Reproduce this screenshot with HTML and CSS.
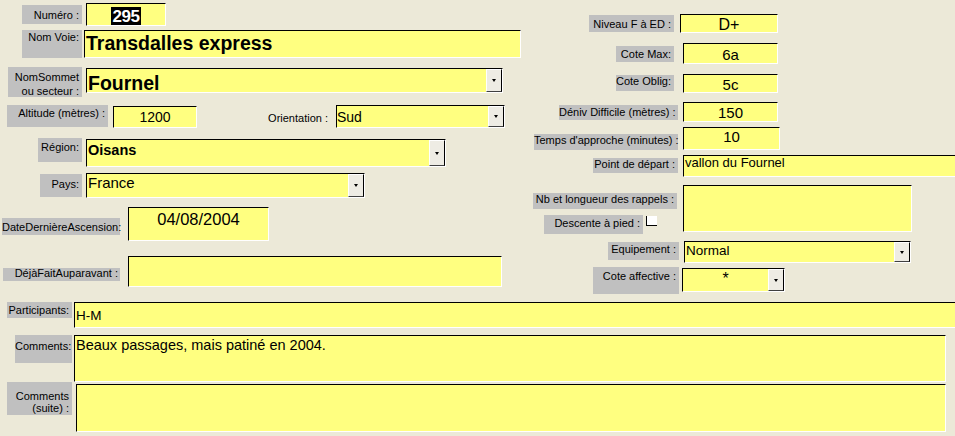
FILE: index.html
```html
<!DOCTYPE html>
<html lang="fr">
<head>
  <meta charset="UTF-8">
  <title>Voies - Fiche</title>
  <link rel="stylesheet" href="styles.css">
</head>
<body>
  <div class="form">
    <div class="top">
      <div class="col-left">
        <div class="row r-numero">
          <div class="lbl l-numero">Numéro :</div>
          <div class="fld f-numero"><div class="val"><span class="sel">295</span></div></div>
        </div>
        <div class="row r-nomvoie">
          <div class="lbl l-nomvoie">Nom Voie:</div>
          <div class="fld f-nomvoie"><div class="val">Transdalles express</div></div>
        </div>
        <div class="row r-sommet">
          <div class="lbl l-sommet">NomSommet<br>ou secteur :</div>
          <div class="fld f-sommet"><div class="val">Fournel</div><div class="btn"></div></div>
        </div>
        <div class="row r-alt">
          <div class="lbl l-alt">Altitude (mètres) :</div>
          <div class="fld f-alt"><div class="val">1200</div></div>
          <div class="lbl plain l-orient">Orientation :</div>
          <div class="fld f-orient"><div class="val">Sud</div><div class="btn"></div></div>
        </div>
        <div class="row r-region">
          <div class="lbl l-region">Région:</div>
          <div class="fld f-region"><div class="val">Oisans</div><div class="btn"></div></div>
        </div>
        <div class="row r-pays">
          <div class="lbl l-pays">Pays:</div>
          <div class="fld f-pays"><div class="val">France</div><div class="btn"></div></div>
        </div>
        <div class="row r-date">
          <div class="lbl l-date">DateDernièreAscension:</div>
          <div class="fld f-date"><div class="val">04/08/2004</div></div>
        </div>
        <div class="row r-deja">
          <div class="lbl l-deja">DéjàFaitAuparavant :</div>
          <div class="fld f-deja"><div class="val"></div></div>
        </div>
      </div>

      <div class="col-right">
        <div class="row r-niveau">
          <div class="lbl l-niveau">Niveau F à ED :</div>
          <div class="fld f-niveau"><div class="val">D+</div></div>
        </div>
        <div class="row r-cotemax">
          <div class="lbl l-cotemax">Cote Max:</div>
          <div class="fld f-cotemax"><div class="val">6a</div></div>
        </div>
        <div class="row r-oblig">
          <div class="lbl l-oblig">Cote Oblig:</div>
          <div class="fld f-oblig"><div class="val">5c</div></div>
        </div>
        <div class="row r-deniv">
          <div class="lbl l-deniv">Déniv Difficile (mètres) :</div>
          <div class="fld f-deniv"><div class="val">150</div></div>
        </div>
        <div class="row r-temps">
          <div class="lbl l-temps">Temps d'approche (minutes) :</div>
          <div class="fld f-temps"><div class="val">10</div></div>
        </div>
        <div class="row r-point">
          <div class="lbl l-point">Point de départ :</div>
          <div class="fld f-point"><div class="val">vallon du Fournel</div></div>
        </div>
        <div class="row r-rappels">
          <div class="stack">
            <div class="lbl l-rappels">Nb et longueur des rappels :</div>
            <div class="check-row">
              <div class="lbl l-descente">Descente à pied :</div>
              <div class="check"></div>
            </div>
          </div>
          <div class="fld f-rappels"><div class="val"></div></div>
        </div>
        <div class="row r-equip">
          <div class="lbl l-equip">Equipement :</div>
          <div class="fld f-equip"><div class="val">Normal</div><div class="btn"></div></div>
        </div>
        <div class="row r-aff">
          <div class="lbl l-aff">Cote affective :</div>
          <div class="fld f-aff"><div class="val">*</div><div class="btn"></div></div>
        </div>
      </div>
    </div>

    <div class="bottom">
      <div class="row r-part">
        <div class="lbl l-part">Participants:</div>
        <div class="fld f-part"><div class="val">H-M</div></div>
      </div>
      <div class="row r-comm">
        <div class="lbl l-comm">Comments:</div>
        <div class="fld f-comm"><div class="val">Beaux passages, mais patiné en 2004.</div></div>
      </div>
      <div class="row r-suite">
        <div class="lbl l-suite">Comments<br>(suite) :</div>
        <div class="fld f-suite"><div class="val"></div></div>
      </div>
    </div>
  </div>
</body>
</html>
```

FILE: styles.css
```css
body {
  margin: 0;
  background: #ece9d8;
  color: #000;
  font-family: "Liberation Sans", Arial, sans-serif;
}

.form {
  width: 955px;
  height: 436px;
  overflow: hidden;
}

.top {
  display: flex;
  height: 294px;
}

.col-left {
  width: 521px;
  flex: none;
}

.col-right {
  flex: 1;
  min-width: 0;
}

.row {
  display: flex;
  align-items: flex-start;
}

/* labels */
.lbl {
  flex: none;
  box-sizing: border-box;
  background: #c0c0c0;
  font-size: 11px;
  line-height: 13px;
  text-align: right;
  padding-right: 3px;
  white-space: nowrap;
}

.lbl.plain {
  background: none;
}

/* fields */
.fld {
  flex: none;
  display: flex;
  box-sizing: border-box;
  background: #ffff80;
  border: 1px solid;
  border-color: #000 #fff #fff #000;
  overflow: hidden;
}

.val {
  flex: 1;
  min-width: 0;
  line-height: 1;
  white-space: nowrap;
}

.btn {
  flex: none;
  width: 16px;
  box-sizing: border-box;
  background: #eeece4;
  border: 1px solid;
  border-color: #fff #000 #404040 #fff;
  display: flex;
  align-items: center;
  justify-content: center;
}

.btn::after {
  content: "";
  border-left: 2px solid transparent;
  border-right: 2px solid transparent;
  border-top: 3px solid #000;
}

/* left column */
.r-numero { margin-top: 3px; height: 23px; }
.l-numero { margin: 2px 0 0 22px; width: 60px; height: 19px; padding-top: 4px; }
.f-numero { margin-left: 4px; width: 80px; height: 23px; }
.f-numero .val {
  text-align: center;
  padding-top: 3px;
  line-height: 18px;
  font-weight: bold;
  font-size: 17px;
}
.sel {
  display: inline-block;
  height: 18px;
  line-height: 19px;
  padding: 0 2px;
  letter-spacing: -0.5px;
  background: #000;
  color: #fff;
}

.r-nomvoie { margin-top: 4px; height: 28px; }
.l-nomvoie { margin-left: 22px; width: 60px; height: 28px; padding-top: 1px; }
.f-nomvoie { margin-left: 2px; width: 437px; height: 28px; }
.f-nomvoie .val { padding: 3px 0 0 1px; font-weight: bold; font-size: 19.5px; }

.r-sommet { margin-top: 9px; height: 30px; }
.l-sommet { margin-left: 8px; width: 74px; height: 30px; padding-top: 3px; line-height: 14px; }
.f-sommet { margin: 1px 0 0 4px; width: 417px; height: 25px; }
.f-sommet .val { padding: 5px 0 0 1px; font-weight: bold; font-size: 19.5px; }

.r-alt { margin-top: 8px; height: 23px; }
.l-alt { margin-left: 7px; width: 101px; height: 22px; padding-top: 2px; }
.f-alt { margin: 1px 0 0 5px; width: 84px; height: 22px; }
.f-alt .val { text-align: center; padding-top: 3px; font-size: 14px; }
.l-orient { margin-left: 65px; width: 70px; height: 20px; padding: 7px 4px 0 0; }
.f-orient { margin-left: 4px; width: 169px; height: 23px; }
.f-orient .val { padding-top: 4px; font-size: 14px; }

.r-region { margin-top: 10px; height: 29px; }
.l-region { margin-left: 38px; width: 44px; height: 24px; padding-top: 3px; }
.f-region { margin: 1px 0 0 4px; width: 360px; height: 28px; }
.f-region .val { padding: 3px 0 0 1px; font-weight: bold; font-size: 14.5px; }

.r-pays { margin-top: 6px; height: 25px; }
.l-pays { margin: 1px 0 0 40px; width: 42px; height: 23px; padding-top: 4px; }
.f-pays { margin-left: 4px; width: 279px; height: 25px; }
.f-pays .val { padding: 1px 0 0 1px; font-size: 15px; }

.r-date { margin-top: 9px; height: 34px; }
.l-date { margin: 11px 0 0 2px; width: 118px; height: 17px; padding: 3px 2px 0 0; }
.f-date { margin-left: 8px; width: 141px; height: 34px; }
.f-date .val { text-align: center; padding-top: 3px; font-size: 16.5px; }

.r-deja { margin-top: 15px; height: 31px; }
.l-deja { margin: 12px 0 0 3px; width: 117px; height: 13px; line-height: 11px; padding-right: 2px; }
.f-deja { margin-left: 8px; width: 374px; height: 31px; }

/* right column */
.r-niveau { margin-top: 14px; height: 19px; }
.l-niveau { margin: 1px 0 0 68px; width: 85px; height: 17px; padding-top: 3px; }
.f-niveau { margin-left: 6px; width: 98px; height: 19px; }
.f-niveau .val { text-align: center; padding-top: 2px; font-size: 16px; }

.r-cotemax { margin-top: 10px; height: 21px; }
.l-cotemax { margin: 3px 0 0 95px; width: 58px; height: 16px; padding-top: 2px; }
.f-cotemax { margin-left: 9px; width: 95px; height: 21px; }
.f-cotemax .val { text-align: center; padding-top: 3px; font-size: 15px; }

.r-oblig { margin-top: 10px; height: 19px; }
.l-oblig { margin: 1px 0 0 95px; width: 58px; height: 16px; }
.f-oblig { margin-left: 9px; width: 95px; height: 19px; }
.f-oblig .val { text-align: center; padding-top: 2px; font-size: 15px; }

.r-deniv { margin-top: 9px; height: 20px; }
.l-deniv { margin: 3px 0 0 38px; width: 119px; height: 15px; padding-top: 1px; }
.f-deniv { margin-left: 5px; width: 95px; height: 20px; }
.f-deniv .val { text-align: center; padding-top: 2px; font-size: 15px; }

.r-temps { margin-top: 5px; height: 23px; }
.l-temps { margin: 7px 0 0 13px; width: 144px; height: 16px; }
.f-temps { margin-left: 5px; width: 97px; height: 23px; }
.f-temps .val { text-align: center; padding-top: 1px; font-size: 15px; }

.r-point { margin-top: 5px; height: 22px; }
.l-point { margin: 3px 0 0 72px; width: 85px; height: 15px; }
.f-point { flex: 1; margin-left: 5px; height: 22px; border-right: none; }
.f-point .val { padding-left: 1px; font-size: 13px; }

.r-rappels { margin-top: 8px; height: 49px; }
.stack { margin: 8px 0 0 12px; width: 145px; }
.l-rappels { width: 144px; height: 16px; }
.check-row { display: flex; align-items: flex-start; margin: 6px 0 0 11px; }
.l-descente { width: 99px; height: 19px; padding-top: 2px; }
.check {
  margin: 1px 0 0 3px;
  width: 11px;
  height: 10px;
  box-sizing: border-box;
  background: #fff;
  border-left: 1px solid #000;
  border-bottom: 1px solid #000;
}
.f-rappels { margin-left: 5px; width: 229px; height: 47px; }

.r-equip { margin-top: 7px; height: 22px; }
.l-equip { margin: 1px 0 0 87px; width: 71px; height: 18px; padding-top: 1px; }
.f-equip { margin-left: 5px; width: 227px; height: 22px; }
.f-equip .val { padding: 2px 0 0 1px; font-size: 13.5px; }

.r-aff { margin-top: 4px; height: 27px; }
.l-aff { margin-left: 72px; width: 86px; height: 27px; padding-top: 3px; }
.f-aff { margin: 1px 0 0 3px; width: 103px; height: 24px; }
.f-aff .val { text-align: center; padding-top: 2px; font-size: 16px; }

/* bottom */
.bottom {
  margin-top: 8px;
}

.r-part { height: 26px; }
.l-part { margin-left: 7px; width: 65px; height: 16px; padding-top: 2px; }
.f-part { flex: 1; margin-left: 2px; height: 26px; border-right: none; }
.f-part .val { padding: 6px 0 0 1px; font-size: 13.5px; }

.r-comm { margin-top: 7px; height: 47px; }
.l-comm { margin-left: 15px; width: 57px; height: 28px; padding-top: 5px; }
.f-comm { margin-left: 2px; width: 872px; height: 47px; }
.f-comm .val { padding: 2px 0 0 1px; font-size: 14.5px; }

.r-suite { height: 50px; }
.l-suite { margin-left: 7px; width: 65px; height: 33px; padding-top: 8px; line-height: 12px; }
.f-suite { margin: 2px 0 0 4px; width: 870px; height: 48px; }
```
